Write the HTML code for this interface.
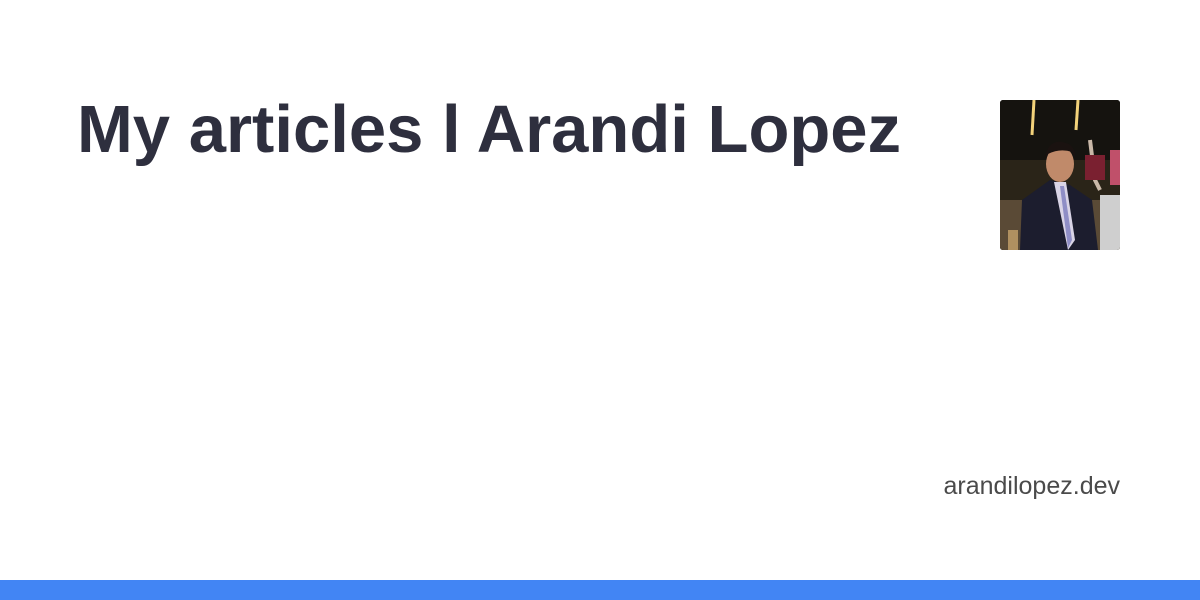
<!DOCTYPE html>
<html><head><style>
body{margin:0;width:1200px;height:600px;background:#fff;position:relative;overflow:hidden;font-family:"Liberation Sans",Helvetica,Arial,sans-serif}
h1{position:absolute;left:77px;top:90px;margin:0;font-size:67px;font-weight:bold;color:#2e2f3e;letter-spacing:0;line-height:80px;white-space:nowrap}
.site{position:absolute;right:80px;top:472px;font-size:25px;color:#4a4a4a}
.bar{position:absolute;left:0;bottom:0;width:1200px;height:20px;background:#4285f4}
.photo{position:absolute;left:1000px;top:100px;width:120px;height:150px;border-radius:3px;overflow:hidden;background:#1a1712}
</style></head><body>
<h1>My articles l Arandi Lopez</h1>
<div class="photo">
<svg width="120" height="150" viewBox="0 0 120 150">
<rect width="120" height="150" fill="#15130f"/>
<rect x="0" y="60" width="120" height="40" fill="#2a2418"/>
<rect x="0" y="100" width="120" height="50" fill="#5a4a36"/>
<line x1="34" y1="0" x2="32" y2="35" stroke="#f3d27a" stroke-width="3"/>
<line x1="78" y1="0" x2="76" y2="30" stroke="#f3d27a" stroke-width="3"/>
<path d="M90 40 L95 80 L100 90" stroke="#c9b8a8" stroke-width="4" fill="none"/>
<rect x="110" y="50" width="10" height="35" fill="#c0506a"/>
<rect x="85" y="55" width="20" height="25" fill="#7a2030"/>
<rect x="8" y="130" width="10" height="20" fill="#b09060"/>
<rect x="100" y="95" width="20" height="55" fill="#cfcfcf"/>
<path d="M20 150 L22 100 L50 80 L70 85 L92 100 L98 150 Z" fill="#1c1d2e"/>
<path d="M54 82 L66 82 L75 140 L68 150 Z" fill="#d9d4e6"/>
<path d="M60 86 L64 86 L72 140 L68 148 Z" fill="#8f8ec6"/>
<ellipse cx="60" cy="64" rx="14" ry="18" fill="#c08a6a"/>
<path d="M45 58 Q48 40 62 42 Q76 44 75 58 L72 52 Q60 48 48 54 Z" fill="#1a1210"/>
</svg>
</div>
<div class="site">arandilopez.dev</div>
<div class="bar"></div>
</body></html>
